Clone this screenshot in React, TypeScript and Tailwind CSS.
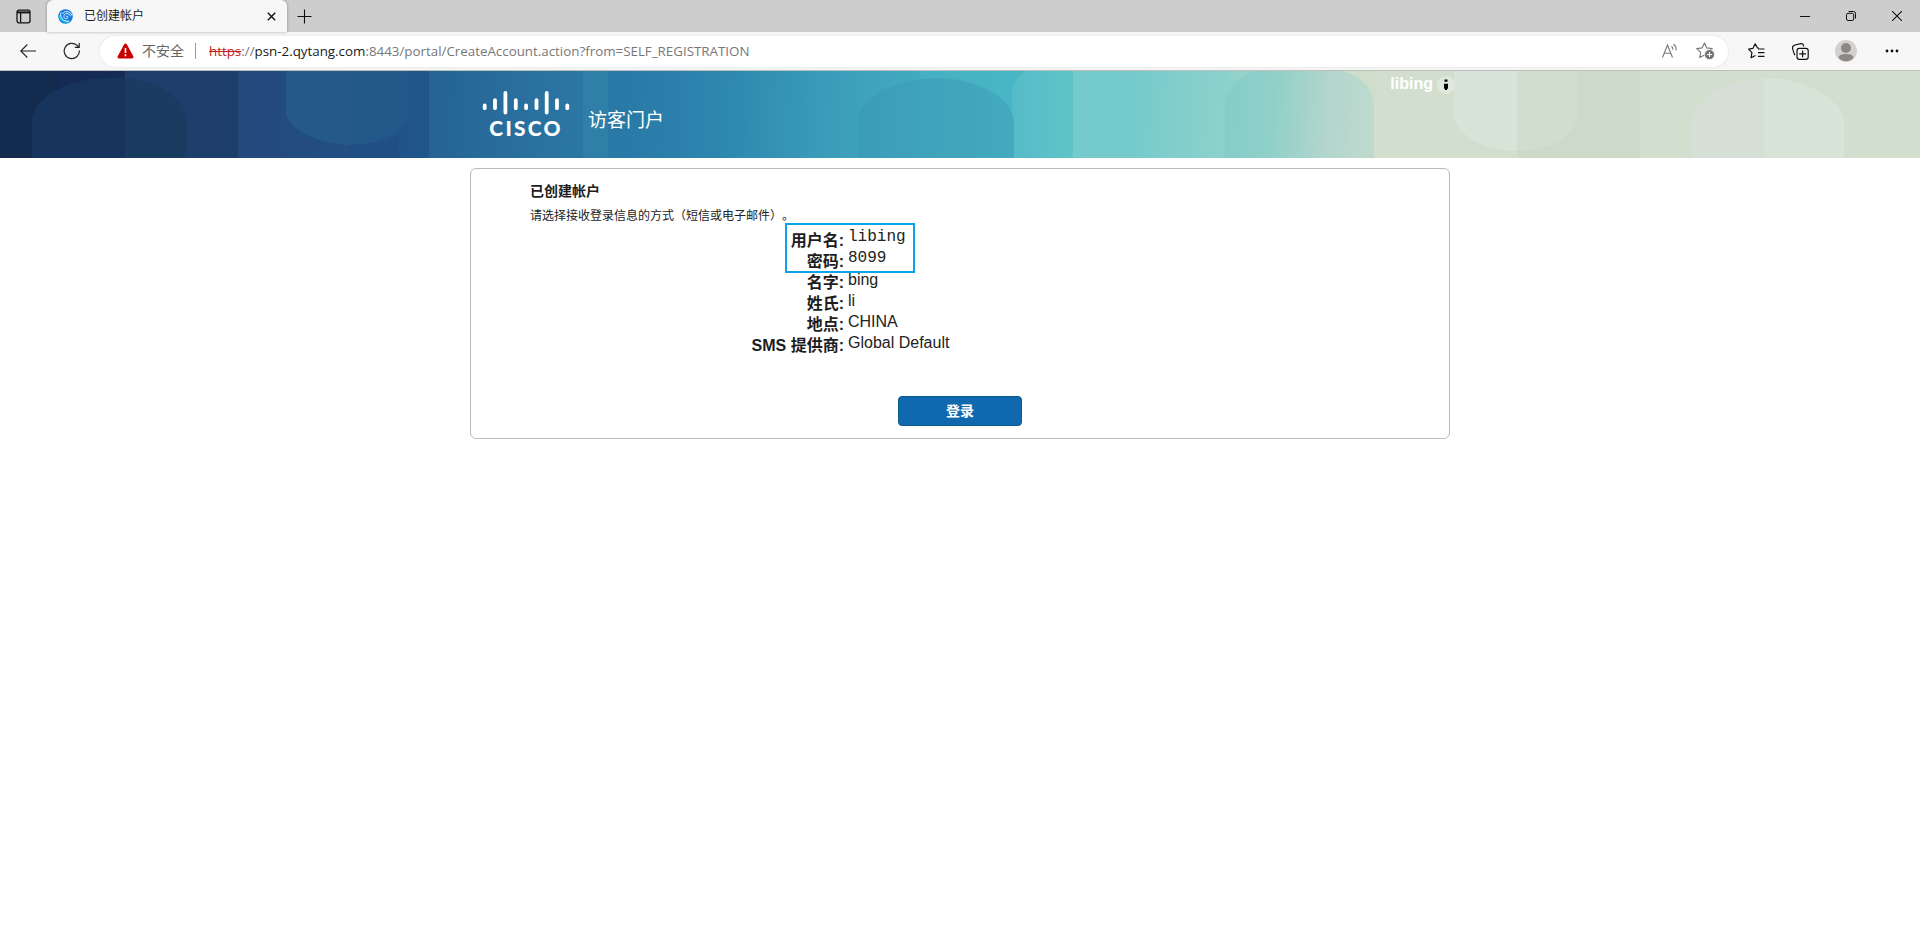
import React from "react";

const details = [
  { label: "用户名:", value: "libing", mono: true },
  { label: "密码:", value: "8099", mono: true },
  { label: "名字:", value: "bing", mono: false },
  { label: "姓氏:", value: "li", mono: false },
  { label: "地点:", value: "CHINA", mono: false },
  { label: "SMS 提供商:", value: "Global Default", mono: false },
];

function TitleBar() {
  return (
    <div className="flex h-8 items-stretch bg-[#cdcdcd]">
      <div className="flex w-[47px] items-center justify-center">
        <svg width="15" height="15" viewBox="0 0 15 15" fill="none" stroke="#111" className="mt-px" strokeWidth="1.3">
          <rect x="1" y="1.2" width="13" height="12.6" rx="2" />
          <path d="M1 3.400h13" strokeWidth="2" />
          <path d="M4.6 4v9.6" />
        </svg>
      </div>
      <div className="flex w-[240px] items-center rounded-t-md bg-[#f7f7f7] pl-[11px] shadow-[0_0_3px_rgba(0,0,0,0.35)]">
        <svg width="15" height="15" viewBox="0 0 15 15" fill="none">
          <circle cx="7.5" cy="7.5" r="7.3" fill="#1479e0" />
          <path d="M.8 6c1 5 6 8 11 6.500" stroke="#18c6f2" strokeWidth="1.800" />
          <path d="M3 3.500c-1.500 5 2.500 9.500 8 8.500M8 7.500c1-1 2.500.2 1.500 1.500-1.600 1.800-4.300 0-3.500-2.500 1-3 5.500-2.500 6.300.8M4.500 5C6 1.500 12 1.500 14 6.500" stroke="#fff" strokeWidth=".9" />
        </svg>
        <span className="ml-[11px] grow text-xs leading-4 text-[#1a1a1a]">已创建帐户</span>
        <svg width="9" height="9" viewBox="0 0 9 9" stroke="#111" strokeWidth="1.4" className="mr-[11px] mt-px">
          <path d="M.8.8l7.400 7.400M8.200.8L.8 8.200" />
        </svg>
      </div>
      <div className="flex grow items-center pl-[10px]">
        <svg width="15" height="15" viewBox="0 0 15 15" stroke="#111" strokeWidth="1.1">
          <path d="M7.500.5v14M.5 7.500h14" />
        </svg>
      </div>
      <div className="flex items-center">
        <svg width="10" height="10" viewBox="0 0 10 10" stroke="#111" className="mr-[36px]">
          <path d="M0 5.500h10" />
        </svg>
        <svg width="10" height="10" viewBox="0 0 10 10" fill="none" stroke="#111" className="mr-9">
          <rect x=".5" y="2.300" width="7.200" height="7.200" rx="1.500" />
          <path d="M2.600.5h4.900a2 2 0 0 1 2 2v5" />
        </svg>
        <svg width="10" height="10" viewBox="0 0 10 10" stroke="#111" strokeWidth="1.1" className="mr-[18px]">
          <path d="M0 0l10 10M10 0L0 10" />
        </svg>
      </div>
    </div>
  );
}

function AddressBar() {
  return (
    <div className="flex h-[39px] items-center border-b border-[#bdbfbd] bg-[#f7f7f7] pl-5">
      <svg width="16" height="14" viewBox="0 0 16 14" fill="none" stroke="#222" strokeWidth="1.1">
        <path d="M16 7H.8M7.300.5L.8 7l6.500 6.500" />
      </svg>
      <svg width="18" height="18" viewBox="0 0 18 18" fill="none" stroke="#222" strokeWidth="1.2" className="ml-[27px]">
        <path d="M16.400 8.500a7.600 7.600 0 1 1-2.400-5.100l2 1.800M16.200 1v4.400h-4.400" />
      </svg>
      <div className="ml-[19px] flex h-[31px] w-[1628px] items-center rounded-full bg-white pl-[17px] pr-[13px] shadow-[0_0_3px_rgba(0,0,0,0.1)]">
        <svg width="17" height="16" viewBox="0 0 17 16">
          <path d="M8.500.5c.6 0 1 .3 1.300.8l6.500 12c.5 1-.1 2.200-1.300 2.200H2c-1.200 0-1.800-1.200-1.300-2.200l6.500-12c.3-.5.7-.8 1.300-.8z" fill="#c80000" />
          <path d="M8.500 5v5M8.500 11.300v1.900" stroke="#fff" strokeWidth="1.600" />
        </svg>
        <span className="ml-[8px] text-sm leading-5 text-[#666]">不安全</span>
        <span className="ml-[11px] h-4 w-px bg-[#999]" />
        <span className="ml-[13px] whitespace-nowrap font-['Open_Sans','Noto_Sans',sans-serif] text-[13.350px] leading-5 text-[#777]">
          <span className="text-[#c5221f] line-through">https</span>://<span className="text-[#1a1a1a]">psn-2.qytang.com</span>
          :8443/portal/CreateAccount.action?from=SELF_REGISTRATION
        </span>
        <svg width="17" height="16" viewBox="0 0 17 16" fill="none" stroke="#777" strokeWidth="1.1" className="ml-auto">
          <path d="M1.500 14.500L6.500 2l5 12.500M3.200 10.200h6.600M10.500 3.200c1 .8 1.500 2 1.300 3.500M12.500 1.200c2 1.400 2.900 3.800 2.400 6.300" />
        </svg>
        <svg width="19" height="18" viewBox="0 0 19 18" fill="none" className="ml-[18px]">
          <path d="M8.500 1l2.300 4.900 5.400.7-4 3.700 1 5.300-4.700-2.600-4.800 2.600 1-5.300-4-3.700 5.400-.7z" stroke="#777" strokeWidth="1.100" strokeLinejoin="round" />
          <circle cx="13.500" cy="12.600" r="5" fill="#737373" stroke="#fff" strokeWidth=".8" />
          <path d="M13.500 10v5.200M10.900 12.600h5.200" stroke="#fff" />
        </svg>
      </div>
      <svg width="17" height="17" viewBox="0 0 17 17" fill="none" stroke="#111" strokeWidth="1.200" strokeLinejoin="round" className="ml-5">
        <path d="M10.800 5.200L9.500 5 7.200.8 5 5.300l-4.400.8 3.300 3.500-.8 5.200 4.400-2.300M10 6h6.500M10 9.700h6.500M10 13.400h6.500" />
      </svg>
      <svg width="17" height="17" viewBox="0 0 17 17" fill="none" stroke="#111" strokeWidth="1.200" className="ml-[27px]">
        <path d="M2.800 12.200C2.300 11 .5 6 .5 4.500S1.500 2.600 3 2l6-1.300c1.500-.3 2.300.7 2.700 2.800" />
        <rect x="5" y="5.300" width="11.200" height="11" rx="2.300" />
        <path d="M10.600 7.500v6.800M7.200 10.900H14" />
      </svg>
      <svg width="22" height="22" viewBox="0 0 22 22" className="ml-[26px]">
        <circle cx="11" cy="11" r="11" fill="#d3d0cd" />
        <circle cx="11" cy="8" r="5" fill="#8b8885" />
        <path d="M3.500 17.500c1-3 4-3.500 7.500-3.500s6.500.5 7.500 3.500c-2 2.500-4.500 3.800-7.500 3.800s-5.500-1.300-7.500-3.800z" fill="#8b8885" />
      </svg>
      <svg width="14" height="4" viewBox="0 0 14 4" fill="#111" className="ml-7">
        <circle cx="2" cy="2" r="1.400" />
        <circle cx="7" cy="2" r="1.400" />
        <circle cx="12" cy="2" r="1.400" />
      </svg>
    </div>
  );
}

function BannerArt() {
  return (
    <svg width="1920" height="87" viewBox="0 0 1920 87" className="absolute inset-0">
      <defs>
        <linearGradient id="navy" gradientUnits="userSpaceOnUse" x1="238" x2="429" y1="0" y2="0">
          <stop offset="0" stopColor="#24487c" />
          <stop offset=".57" stopColor="#224f84" />
          <stop offset="1" stopColor="#20568c" />
        </linearGradient>
        <linearGradient id="sea" gradientUnits="userSpaceOnUse" x1="429" x2="1223" y1="0" y2="30">
          <stop offset="0" stopColor="#256393" />
          <stop offset=".18" stopColor="#2b76a3" />
          <stop offset=".25" stopColor="#2979a7" />
          <stop offset=".38" stopColor="#2e88b0" />
          <stop offset=".5" stopColor="#3b9cb9" />
          <stop offset=".63" stopColor="#42acbf" />
          <stop offset=".74" stopColor="#49b6c5" />
          <stop offset=".8" stopColor="#5bc2c7" />
          <stop offset=".88" stopColor="#75cacc" />
          <stop offset="1" stopColor="#8cd1cb" />
        </linearGradient>
        <linearGradient id="dome" gradientUnits="userSpaceOnUse" x1="858" x2="1014" y1="0" y2="0">
          <stop offset="0" stopColor="#3b9cb9" />
          <stop offset=".4" stopColor="#3fa2bb" />
          <stop offset="1" stopColor="#43aabe" />
        </linearGradient>
        <linearGradient id="pale" gradientUnits="userSpaceOnUse" x1="1223" x2="1374" y1="0" y2="0">
          <stop offset="0" stopColor="#8ad1ca" />
          <stop offset=".6" stopColor="#b4d8cc" />
          <stop offset=".95" stopColor="#d1decc" />
        </linearGradient>
        <linearGradient id="mint" gradientUnits="userSpaceOnUse" x1="1223" x2="1374" y1="0" y2="10">
          <stop offset="0" stopColor="#84cdc7" />
          <stop offset=".35" stopColor="#90d0c9" />
          <stop offset=".7" stopColor="#b2d5cc" />
          <stop offset="1" stopColor="#bedacf" />
        </linearGradient>
        <linearGradient id="aqua" gradientUnits="userSpaceOnUse" x1="1012" x2="1073" y1="0" y2="0">
          <stop offset="0" stopColor="#55bbc8" />
          <stop offset="1" stopColor="#60c4c7" />
        </linearGradient>
      </defs>
      <path d="M0 0h60v87H0z" fill="#132b4e" />
      <path d="M60 0h65v87H60z" fill="#152b56" />
      <path d="M125 0h113v87H125z" fill="#1e3e6b" />
      <path d="M32 87V47C38 22 72 7 110 7h15v80z" fill="#17345c" />
      <path d="M125 7c32 2 60 20 62 42v38h-62z" fill="#1a3c60" />
      <path d="M238 0h191v87H238z" fill="url(#navy)" />
      <path d="M286 0h63v74c-32-1-60-16-63-31z" fill="#24598a" />
      <path d="M349 0h60v45c-5 16-30 29-60 29z" fill="#23588a" />
      <path d="M349 74v13h50V64c-13 7-30 10-50 10z" fill="#204b82" opacity=".4" />
      <path d="M429 0h794v87H429z" fill="url(#sea)" />
      <path d="M583 0h25v87h-25z" fill="#3589ac" opacity=".45" />
      <path d="M706 0h1v87h-1z" fill="#3a94b7" opacity=".25" />
      <path d="M920 0h92v87h-92z" fill="#4bbac6" opacity=".3" />
      <path d="M1012 87V18q4-12 13-18h48v87z" fill="url(#aqua)" />
      <path d="M858 87V45C866 22 900 7 937 7c40 0 77 20 77 45v35z" fill="url(#dome)" />
      <path d="M1073 0h43q18 8 20 22v65h-63z" fill="#75cacc" />
      <path d="M1223 0h152v87h-152z" fill="url(#pale)" />
      <path d="M1225 87V28q9-20 28-28h90q28 8 31 33v54z" fill="url(#mint)" />
      <path d="M1374 0h546v87h-546z" fill="#d2dfce" />
      <path d="M1343 0h32v34q-4-26-32-34z" fill="#cfdecb" />
      <path d="M1517 0h123v87h-123z" fill="#cddac9" />
      <path d="M1454 0h63v80c-32 0-59-15-63-34z" fill="#d9e4d8" />
      <path d="M1517 0h60v48c-4 18-28 32-60 32z" fill="#d1decd" />
      <path d="M1691 87V48c5-23 38-41 73-41v80z" fill="#d5dfd5" />
      <path d="M1764 7c40 0 76 20 80 43v37h-80z" fill="#d9e4d8" />
    </svg>
  );
}

function CiscoLogo() {
  return (
    <div className="flex w-[88px] flex-col items-center">
      <svg width="88" height="24" viewBox="0 0 88 24" stroke="#fff" strokeWidth="3.800" strokeLinecap="round">
        <path d="M2.700 14.300v2.900M13 9.200v8M23.400 2v19.500M33.800 9.200v8M44.100 14.300v2.900M54.500 9.200v8M64.700 2v19.500M75 9.200v8M85.300 14.300v2.900" />
      </svg>
      <div className="mt-[3px] font-['Lato',sans-serif] text-[21px] font-black leading-5 tracking-[2.200px]">CISCO</div>
    </div>
  );
}

function Banner() {
  return (
    <header className="relative h-[87px] overflow-hidden text-white">
      <BannerArt />
      <div className="relative mx-auto flex w-[980px]">
        <div className="pl-3 pt-5">
          <CiscoLogo />
        </div>
        <h1 className="ml-[18px] mt-9 text-[19px] leading-7">访客门户</h1>
        <div className="ml-auto mr-[-5px] flex h-[25px] items-center gap-[4px]">
          <span className="font-['Liberation_Sans',sans-serif] text-base font-bold leading-5">libing</span>
          <svg width="18" height="18" viewBox="0 0 18 18" className="mt-[2px] shrink-0">
            <circle cx="9" cy="9" r="9" fill="#dfe8dd" />
            <path d="M7.500 3.500h3v2.300h-3zM7 7.800h4v5H10v1.200H8v-1.200H7z" fill="#000" />
          </svg>
        </div>
      </div>
    </header>
  );
}

export default function App() {
  return (
    <div className="h-[942px] overflow-hidden bg-white font-['Liberation_Sans','Noto_Sans_CJK_SC',sans-serif] text-[#222]">
      <TitleBar />
      <AddressBar />
      <Banner />
      <main className="mx-auto mt-[10px] h-[271px] w-[980px] rounded-md border border-[#bababa]">
        <div className="pl-[59px] pt-3">
          <h2 className="text-sm font-bold leading-5 text-[#1d1d1d]">已创建帐户</h2>
          <p className="mt-[5px] text-xs leading-5 [text-spacing-trim:space-all]">请选择接收登录信息的方式（短信或电子邮件）。</p>
        </div>
        <div className="relative pt-px">
          <dl>
            {details.map((row) => (
              <div key={row.label} className="flex h-[21px] gap-[4px]">
                <dt className="mt-[3px] w-[373px] whitespace-nowrap text-right text-base font-bold leading-[21px] text-[#1d1d1d]">{row.label}</dt>
                <dd className={row.mono ? "font-['Liberation_Mono',monospace] text-base leading-[21px]" : "text-base leading-[21px]"}>{row.value}</dd>
              </div>
            ))}
          </dl>
          <div className="absolute left-[314px] top-[-3px] h-[50px] w-[130px] border-2 border-[#0ca4e9]" />
        </div>
        <button className="mx-auto mt-[43px] block h-[30px] w-[124px] rounded border border-[#0b5a8e] bg-[#1068ae] text-sm font-bold leading-7 text-white">登录</button>
      </main>
    </div>
  );
}
